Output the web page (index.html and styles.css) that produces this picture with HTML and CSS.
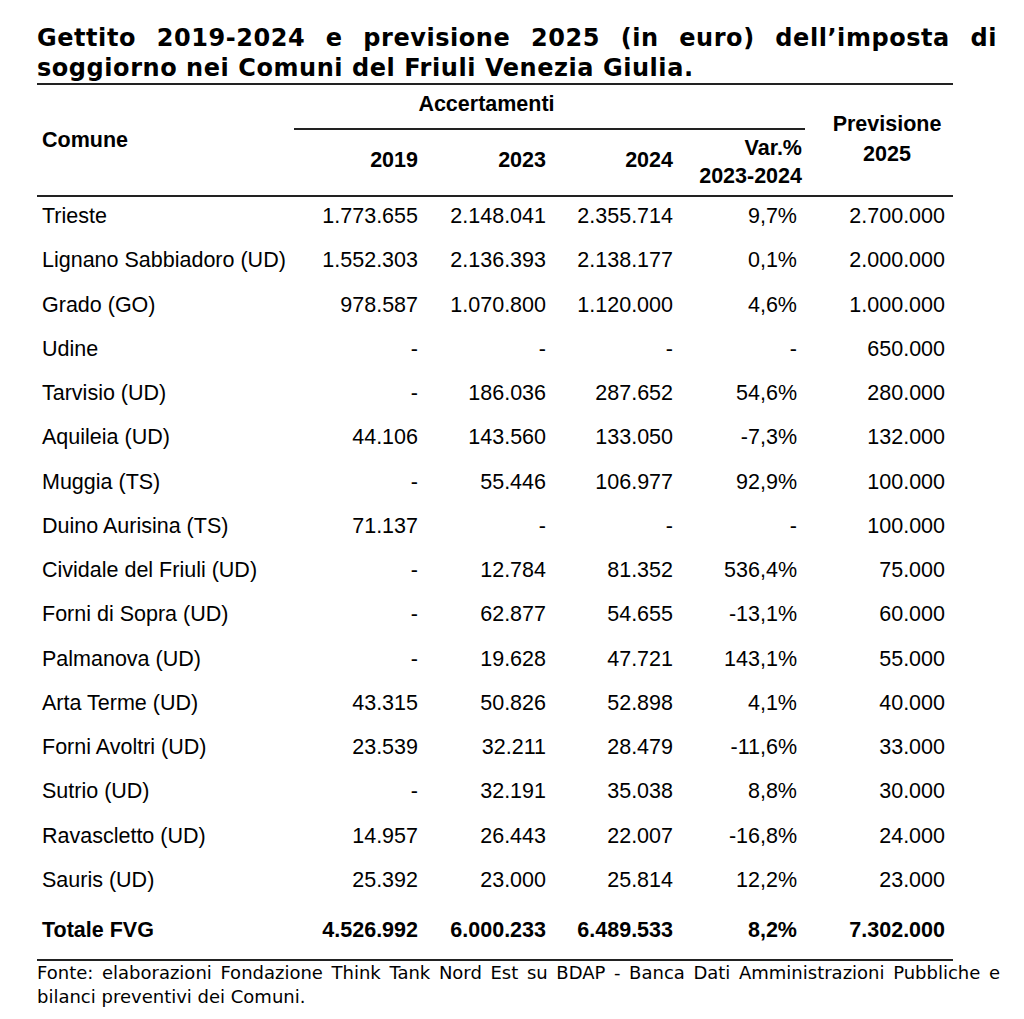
FILE: index.html
```html
<!DOCTYPE html>
<html lang="it">
<head>
<meta charset="utf-8">
<title>Imposta di soggiorno FVG</title>
<link rel="stylesheet" href="styles.css">
</head>
<body>
<div class="page">
  <h1 class="title">
    <span class="jline">Gettito 2019-2024 e previsione 2025 (in euro) dell’imposta di</span>
    <span class="line">soggiorno nei Comuni del Friuli Venezia Giulia.</span>
  </h1>
  <div class="table">
    <div class="head">
      <div class="h-comune">Comune</div>
      <div class="h-acc">Accertamenti</div>
      <div class="h-rule"></div>
      <div class="h-year y1">2019</div>
      <div class="h-year y2">2023</div>
      <div class="h-year y3">2024</div>
      <div class="h-var">Var.%<br>2023-2024</div>
      <div class="h-prev">Previsione<br>2025</div>
    </div>
    <div class="body">
      <div class="row"><div class="c-name">Trieste</div><div class="c-num">1.773.655</div><div class="c-num">2.148.041</div><div class="c-num">2.355.714</div><div class="c-var">9,7%</div><div class="c-prev">2.700.000</div></div>
      <div class="row"><div class="c-name">Lignano Sabbiadoro (UD)</div><div class="c-num">1.552.303</div><div class="c-num">2.136.393</div><div class="c-num">2.138.177</div><div class="c-var">0,1%</div><div class="c-prev">2.000.000</div></div>
      <div class="row"><div class="c-name">Grado (GO)</div><div class="c-num">978.587</div><div class="c-num">1.070.800</div><div class="c-num">1.120.000</div><div class="c-var">4,6%</div><div class="c-prev">1.000.000</div></div>
      <div class="row"><div class="c-name">Udine</div><div class="c-num">-</div><div class="c-num">-</div><div class="c-num">-</div><div class="c-var">-</div><div class="c-prev">650.000</div></div>
      <div class="row"><div class="c-name">Tarvisio (UD)</div><div class="c-num">-</div><div class="c-num">186.036</div><div class="c-num">287.652</div><div class="c-var">54,6%</div><div class="c-prev">280.000</div></div>
      <div class="row"><div class="c-name">Aquileia (UD)</div><div class="c-num">44.106</div><div class="c-num">143.560</div><div class="c-num">133.050</div><div class="c-var">-7,3%</div><div class="c-prev">132.000</div></div>
      <div class="row"><div class="c-name">Muggia (TS)</div><div class="c-num">-</div><div class="c-num">55.446</div><div class="c-num">106.977</div><div class="c-var">92,9%</div><div class="c-prev">100.000</div></div>
      <div class="row"><div class="c-name">Duino Aurisina (TS)</div><div class="c-num">71.137</div><div class="c-num">-</div><div class="c-num">-</div><div class="c-var">-</div><div class="c-prev">100.000</div></div>
      <div class="row"><div class="c-name">Cividale del Friuli (UD)</div><div class="c-num">-</div><div class="c-num">12.784</div><div class="c-num">81.352</div><div class="c-var">536,4%</div><div class="c-prev">75.000</div></div>
      <div class="row"><div class="c-name">Forni di Sopra (UD)</div><div class="c-num">-</div><div class="c-num">62.877</div><div class="c-num">54.655</div><div class="c-var">-13,1%</div><div class="c-prev">60.000</div></div>
      <div class="row"><div class="c-name">Palmanova (UD)</div><div class="c-num">-</div><div class="c-num">19.628</div><div class="c-num">47.721</div><div class="c-var">143,1%</div><div class="c-prev">55.000</div></div>
      <div class="row"><div class="c-name">Arta Terme (UD)</div><div class="c-num">43.315</div><div class="c-num">50.826</div><div class="c-num">52.898</div><div class="c-var">4,1%</div><div class="c-prev">40.000</div></div>
      <div class="row"><div class="c-name">Forni Avoltri (UD)</div><div class="c-num">23.539</div><div class="c-num">32.211</div><div class="c-num">28.479</div><div class="c-var">-11,6%</div><div class="c-prev">33.000</div></div>
      <div class="row"><div class="c-name">Sutrio (UD)</div><div class="c-num">-</div><div class="c-num">32.191</div><div class="c-num">35.038</div><div class="c-var">8,8%</div><div class="c-prev">30.000</div></div>
      <div class="row"><div class="c-name">Ravascletto (UD)</div><div class="c-num">14.957</div><div class="c-num">26.443</div><div class="c-num">22.007</div><div class="c-var">-16,8%</div><div class="c-prev">24.000</div></div>
      <div class="row"><div class="c-name">Sauris (UD)</div><div class="c-num">25.392</div><div class="c-num">23.000</div><div class="c-num">25.814</div><div class="c-var">12,2%</div><div class="c-prev">23.000</div></div>
      <div class="row total"><div class="c-name">Totale FVG</div><div class="c-num">4.526.992</div><div class="c-num">6.000.233</div><div class="c-num">6.489.533</div><div class="c-var">8,2%</div><div class="c-prev">7.302.000</div></div>
    </div>
  </div>
  <p class="source">
    <span class="jline">Fonte: elaborazioni Fondazione Think Tank Nord Est su BDAP - Banca Dati Amministrazioni Pubbliche e</span>
    <span class="line">bilanci preventivi dei Comuni.</span>
  </p>
</div>
</body>
</html>
```
FILE: styles.css
```css
html, body {
  margin: 0;
  padding: 0;
  background: #ffffff;
  color: #000000;
}

.page {
  padding-left: 37px;
}

.jline {
  display: block;
  text-align: justify;
  text-align-last: justify;
}

.line {
  display: block;
}

.title {
  margin: 23px 0 0 0;
  width: 960px;
  font-family: "DejaVu Sans", Verdana, sans-serif;
  font-weight: bold;
  font-size: 24px;
  letter-spacing: 0.55px;
  line-height: 30px;
}

.table {
  width: 916px;
  border-top: 2px solid #222;
  border-bottom: 2px solid #222;
  font-family: "Liberation Sans", Arial, sans-serif;
  font-size: 21.5px;
  line-height: 24px;
}

.head {
  display: grid;
  grid-template-columns: 258px 128px 128px 127px 127px 148px;
  grid-template-rows: 43px 2px 65px;
  border-bottom: 2px solid #222;
  font-weight: bold;
}

.h-comune {
  grid-column: 1;
  grid-row: 1 / 4;
  align-self: center;
  padding-left: 5px;
}

.h-acc {
  grid-column: 2 / 5;
  grid-row: 1;
  text-align: center;
  padding-top: 7px;
}

.h-rule {
  grid-column: 2 / 6;
  grid-row: 2;
  background: #222;
  margin-left: -1px;
}

.h-year {
  grid-row: 3;
  text-align: right;
  padding-right: 5px;
  padding-top: 18px;
}
.y1 { grid-column: 2; }
.y2 { grid-column: 3; }
.y3 { grid-column: 4; }

.h-var {
  grid-column: 5;
  grid-row: 3;
  text-align: right;
  padding-right: 3px;
  padding-top: 4px;
  line-height: 28px;
}

.h-prev {
  grid-column: 6;
  grid-row: 1 / 4;
  align-self: center;
  text-align: center;
  padding-left: 16px;
  padding-bottom: 2px;
  line-height: 30px;
}

.row {
  display: grid;
  grid-template-columns: 258px 128px 128px 127px 127px 148px;
  height: 44.27px;
  box-sizing: border-box;
  padding-top: 7px;
}

.c-name {
  padding-left: 5px;
  white-space: nowrap;
}

.c-num {
  text-align: right;
  padding-right: 5px;
}

.c-var {
  text-align: right;
  padding-right: 8px;
}

.c-prev {
  text-align: right;
  padding-right: 8px;
}

.row.total {
  font-weight: bold;
  height: 54px;
  padding-top: 12.7px;
}

.source {
  margin: 0;
  width: 963px;
  font-family: "DejaVu Sans", Verdana, sans-serif;
  font-size: 18px;
  line-height: 24px;
}
```
